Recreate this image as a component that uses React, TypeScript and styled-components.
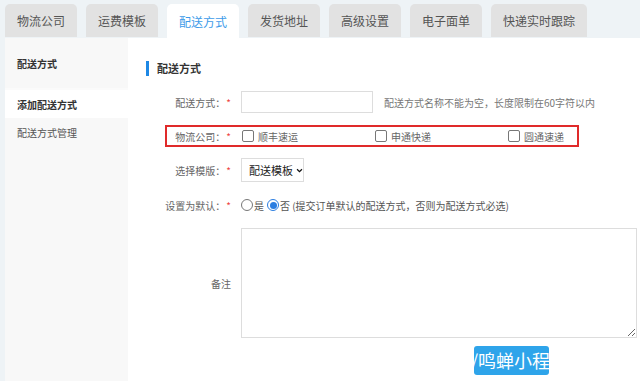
import React from "react"
import styled, { createGlobalStyle } from "styled-components"

const GlobalStyle = createGlobalStyle`
    html, body {
        margin: 0;
        padding: 0;
        background: #eef3f6;
        font-family: "Noto Sans CJK SC", "Noto Sans", sans-serif;
        overflow: hidden;
    }
`
const Page = styled.div`
    width: 640px;
    height: 381px;
    padding: 4px 0 0 5px;
    box-sizing: border-box;
    display: flex;
    flex-direction: column;
`
const TabBar = styled.div`
    display: flex;
    gap: 9px;
    height: 34px;
`
const Tab = styled.div<{ $active?: boolean }>`
    height: ${p => p.$active ? "34px" : "33px"};
    padding: 0 12px;
    display: flex;
    align-items: center;
    border-radius: 5px 5px 0 0;
    font-size: 12px;
    color: ${p => p.$active ? "#3d9be9" : "#555"};
    background: ${p => p.$active ? "#fff" : "#e2e2e2"};
    white-space: nowrap;
`
const Body = styled.div`
    flex: 1;
    display: flex;
`
const Sidebar = styled.div`
    width: 123px;
    background: #f8f8f8;
    display: flex;
    flex-direction: column;
`
const SideHeader = styled.div`
    height: 50px;
    padding-left: 12px;
    display: flex;
    align-items: center;
    font-size: 10px;
    font-weight: 700;
    color: #333;
    border-bottom: 2px solid #fbfbfb;
`
const SideItem = styled.div<{ $active?: boolean }>`
    height: 28px;
    padding-left: 12px;
    display: flex;
    align-items: center;
    font-size: 10px;
    font-weight: ${p => p.$active ? 700 : 400};
    color: ${p => p.$active ? "#333" : "#555"};
    background: ${p => p.$active ? "#fff" : "transparent"};
`
const Main = styled.div`
    flex: 1;
    background: #fff;
    padding: 22px 0 0 18px;
    display: flex;
    flex-direction: column;
`
const SectionTitle = styled.div`
    display: flex;
    align-items: center;
    gap: 8px;
    height: 16px;
    font-size: 11px;
    font-weight: 700;
    color: #333;
    &::before {
        content: "";
        width: 3px;
        height: 15px;
        background: #1e88e5;
    }
`
const Form = styled.div`
    margin: 14px 0 0 -18px;
    display: flex;
    flex-direction: column;
    gap: 11px;
`
const Row = styled.div<{ $highlight?: boolean }>`
    display: flex;
    align-items: center;
    gap: 7px;
    min-height: 24px;
    ${p => p.$highlight && `
        margin-left: 37px;
        width: 414px;
        height: 22px;
        min-height: 0;
        box-sizing: border-box;
        border: 2px solid #e02a2a;
    `}
`
const Label = styled.div<{ $width: number }>`
    flex-shrink: 0;
    width: ${p => p.$width}px;
    padding-right: 3px;
    box-sizing: border-box;
    text-align: right;
    font-size: 10px;
    color: #666;
    white-space: nowrap;
`
const Star = styled.span`
    color: #e44;
    margin-left: 1px;
`
const TextInput = styled.div`
    width: 132px;
    height: 22px;
    box-sizing: border-box;
    border: 1px solid #ddd;
`
const Hint = styled.span`
    margin-left: 4px;
    font-size: 10px;
    color: #777;
`
const Options = styled.div`
    display: flex;
    margin-left: 1px;
`
const Option = styled.label`
    width: 133px;
    flex-shrink: 0;
    display: flex;
    align-items: center;
    gap: 4px;
    font-size: 10px;
    color: #666;
    white-space: nowrap;
    &:last-child {
        width: auto;
    }
`
const Box = styled.span`
    width: 12px;
    height: 12px;
    box-sizing: border-box;
    border: 1px solid #777;
    border-radius: 2px;
    background: #fff;
`
const Select = styled.div`
    width: 63px;
    height: 24px;
    box-sizing: border-box;
    border: 1px solid #ddd;
    padding-left: 7px;
    display: flex;
    align-items: center;
    gap: 3px;
    font-size: 11px;
    color: #222;
    white-space: nowrap;
`
const RadioGroup = styled.div`
    display: flex;
    align-items: center;
    font-size: 10px;
    color: #555;
    white-space: nowrap;
`
const Radio = styled.span<{ $checked?: boolean }>`
    width: 12px;
    height: 12px;
    box-sizing: border-box;
    border-radius: 50%;
    border: 1px solid ${p => p.$checked ? "#2a7de1" : "#777"};
    margin: 0 1px 0 ${p => p.$checked ? "3px" : "0"};
    display: flex;
    align-items: center;
    justify-content: center;
    &::after {
        content: "";
        width: 7px;
        height: 7px;
        border-radius: 50%;
        background: ${p => p.$checked ? "#2a7de1" : "transparent"};
    }
`
const TextArea = styled.textarea`
    width: 396px;
    height: 110px;
    box-sizing: border-box;
    border: 1px solid #ddd;
    font-family: inherit;
    resize: both;
    margin: 0;
`
const ButtonRow = styled.div`
    padding: 8px 0 0 346px;
    margin-left: -18px;
`
const Button = styled.div`
    width: 75px;
    height: 29px;
    border-radius: 3px;
    background: #2ea4ea;
    color: #fff;
    font-size: 18px;
    line-height: 29px;
    white-space: nowrap;
    overflow: hidden;
    text-indent: -3px;
`

const tabs = ["物流公司", "运费模板", "配送方式", "发货地址", "高级设置", "电子面单", "快递实时跟踪"]
const companies = ["顺丰速运", "申通快递", "圆通速递"]

const App = () => {
    return <Page>
        <GlobalStyle />
        <TabBar>
            {tabs.map(t => <Tab key={t} $active={t === "配送方式"}>{t}</Tab>)}
        </TabBar>
        <Body>
            <Sidebar>
                <SideHeader>配送方式</SideHeader>
                <SideItem $active>添加配送方式</SideItem>
                <SideItem>配送方式管理</SideItem>
            </Sidebar>
            <Main>
                <SectionTitle>配送方式</SectionTitle>
                <Form>
                    <Row>
                        <Label $width={106}>配送方式：<Star>*</Star></Label>
                        <TextInput />
                        <Hint>配送方式名称不能为空，长度限制在60字符以内</Hint>
                    </Row>
                    <Row $highlight>
                        <Label $width={67}>物流公司：<Star>*</Star></Label>
                        <Options>
                            {companies.map(c => <Option key={c}><Box />{c}</Option>)}
                        </Options>
                    </Row>
                    <Row>
                        <Label $width={106}>选择模版：<Star>*</Star></Label>
                        <Select>
                            配送模板
                            <svg width="9" height="9" viewBox="0 0 10 10">
                                <path d="M1.5 3.2 L5 6.7 L8.5 3.2" stroke="#111" strokeWidth="1.8" fill="none" />
                            </svg>
                        </Select>
                    </Row>
                    <Row>
                        <Label $width={106}>设置为默认：<Star>*</Star></Label>
                        <RadioGroup>
                            <Radio />是
                            <Radio $checked />否 (提交订单默认的配送方式，否则为配送方式必选)
                        </RadioGroup>
                    </Row>
                    <Row>
                        <Label $width={106}>备注</Label>
                        <TextArea />
                    </Row>
                </Form>
                <ButtonRow>
                    <Button>/鸣蝉小程序</Button>
                </ButtonRow>
            </Main>
        </Body>
    </Page>
}

export default App
